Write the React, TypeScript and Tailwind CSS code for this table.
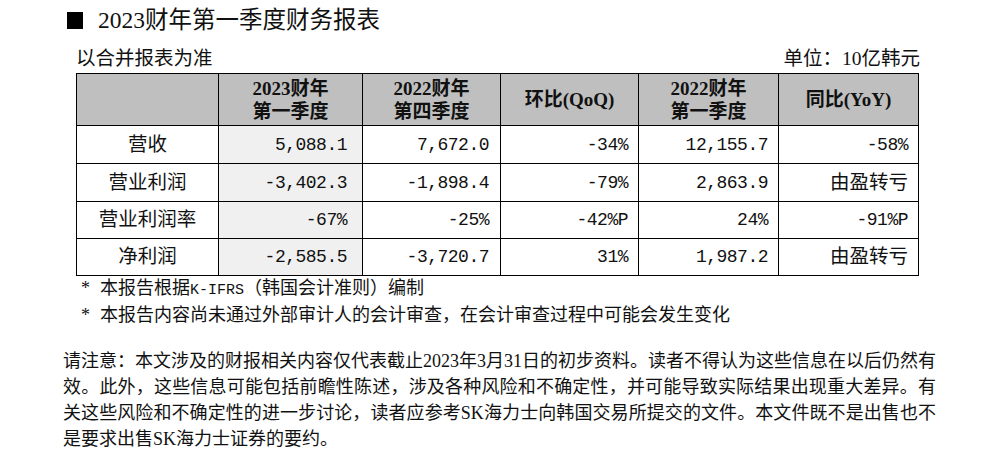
import React from "react";

const serif = "font-['Liberation_Serif','Noto_Sans_CJK_SC',serif]";
const mono = "font-['Liberation_Mono','Noto_Sans_CJK_SC',monospace]";

type Row = { label: string; cells: string[] };

const rows: Row[] = [
  { label: "营收", cells: ["5,088.1", "7,672.0", "-34%", "12,155.7", "-58%"] },
  { label: "营业利润", cells: ["-3,402.3", "-1,898.4", "-79%", "2,863.9", "由盈转亏"] },
  { label: "营业利润率", cells: ["-67%", "-25%", "-42%P", "24%", "-91%P"] },
  { label: "净利润", cells: ["-2,585.5", "-3,720.7", "31%", "1,987.2", "由盈转亏"] },
];

const heights = ["h-[38px]", "h-[38px]", "h-[37px]", "h-[37px]"];
const pads = ["pr-[15px]", "pr-[11px]", "pr-[10px]", "pr-[10px]", "pr-[10px]"];

function isCJK(s: string) {
  return /[\u4e00-\u9fff]/.test(s);
}

export default function App() {
  return (
    <div className={`w-[1000px] h-[454px] bg-white text-[#111] ${serif} overflow-hidden`}>
      {/* Title */}
      <div className="flex items-center h-[40px] pl-[67px]">
        <div className="w-[16px] h-[17px] bg-black" />
        <div className="ml-[15px] text-[23.5px] leading-[30px]">2023财年第一季度财务报表</div>
      </div>

      {/* Subtitle row */}
      <div className="flex items-center justify-between h-[33px] pl-[76px] pr-[80px] pt-[4px] text-[19.5px] leading-[26px]">
        <span>以合并报表为准</span>
        <span>单位：10亿韩元</span>
      </div>

      {/* Table */}
      <div className="pl-[76px]">
        <table className="table-fixed border-collapse border border-black w-[842px]">
          <colgroup>
            <col className="w-[142px]" />
            <col className="w-[144px]" />
            <col className="w-[138px]" />
            <col className="w-[138px]" />
            <col className="w-[140px]" />
            <col className="w-[140px]" />
          </colgroup>
          <thead>
            <tr className="h-[52px] bg-[#bfbfbf]">
              <th className="border border-black" />
              <th className="border border-black font-bold text-[19px] leading-[23px] text-center">
                <div>2023财年</div>
                <div>第一季度</div>
              </th>
              <th className="border border-black font-bold text-[19px] leading-[23px] text-center">
                <div>2022财年</div>
                <div>第四季度</div>
              </th>
              <th className="border border-black font-bold text-[19px] leading-[23px] text-center">
                环比(QoQ)
              </th>
              <th className="border border-black font-bold text-[19px] leading-[23px] text-center">
                <div>2022财年</div>
                <div>第一季度</div>
              </th>
              <th className="border border-black font-bold text-[19px] leading-[23px] text-center">
                同比(YoY)
              </th>
            </tr>
          </thead>
          <tbody>
            {rows.map((r, i) => (
              <tr key={r.label} className={heights[i]}>
                <td className="border border-black text-center text-[19.5px] leading-[26px] p-0">{r.label}</td>
                {r.cells.map((c, j) => (
                  <td
                    key={j}
                    className={`border border-black text-right p-0 ${pads[j]} ${j === 0 ? "bg-[#f0f0f0]" : ""} ${
                      isCJK(c)
                        ? "text-[19.5px] leading-[26px]"
                        : `${mono} text-[18px] tracking-[-0.5px] leading-[26px]`
                    }`}
                  >
                    {c}
                  </td>
                ))}
              </tr>
            ))}
          </tbody>
        </table>
      </div>

      {/* Footnotes */}
      <div className="pl-[81px] text-[18px] leading-[24px]">
        <div className="flex">
          <span className="w-[19px] shrink-0">*</span>
          <span className="whitespace-nowrap">
            本报告根据<span className={`${mono} text-[15px]`}>K-IFRS</span>（韩国会计准则）编制
          </span>
        </div>
        <div className="flex">
          <span className="w-[19px] shrink-0">*</span>
          <span className="whitespace-nowrap">本报告内容尚未通过外部审计人的会计审查，在会计审查过程中可能会发生变化</span>
        </div>
      </div>

      {/* Disclaimer */}
      <div className="mt-[21px] pl-[63px] w-[936px] text-[18px] leading-[26px]">
        <div className="whitespace-nowrap text-justify [text-align-last:justify]">
          请注意：本文涉及的财报相关内容仅代表截止2023年3月31日的初步资料。读者不得认为这些信息在以后仍然有
        </div>
        <div className="whitespace-nowrap text-justify [text-align-last:justify]">
          效。此外，这些信息可能包括前瞻性陈述，涉及各种风险和不确定性，并可能导致实际结果出现重大差异。有
        </div>
        <div className="whitespace-nowrap text-justify [text-align-last:justify]">
          关这些风险和不确定性的进一步讨论，读者应参考SK海力士向韩国交易所提交的文件。本文件既不是出售也不
        </div>
        <div className="whitespace-nowrap">是要求出售SK海力士证券的要约。</div>
      </div>
    </div>
  );
}
